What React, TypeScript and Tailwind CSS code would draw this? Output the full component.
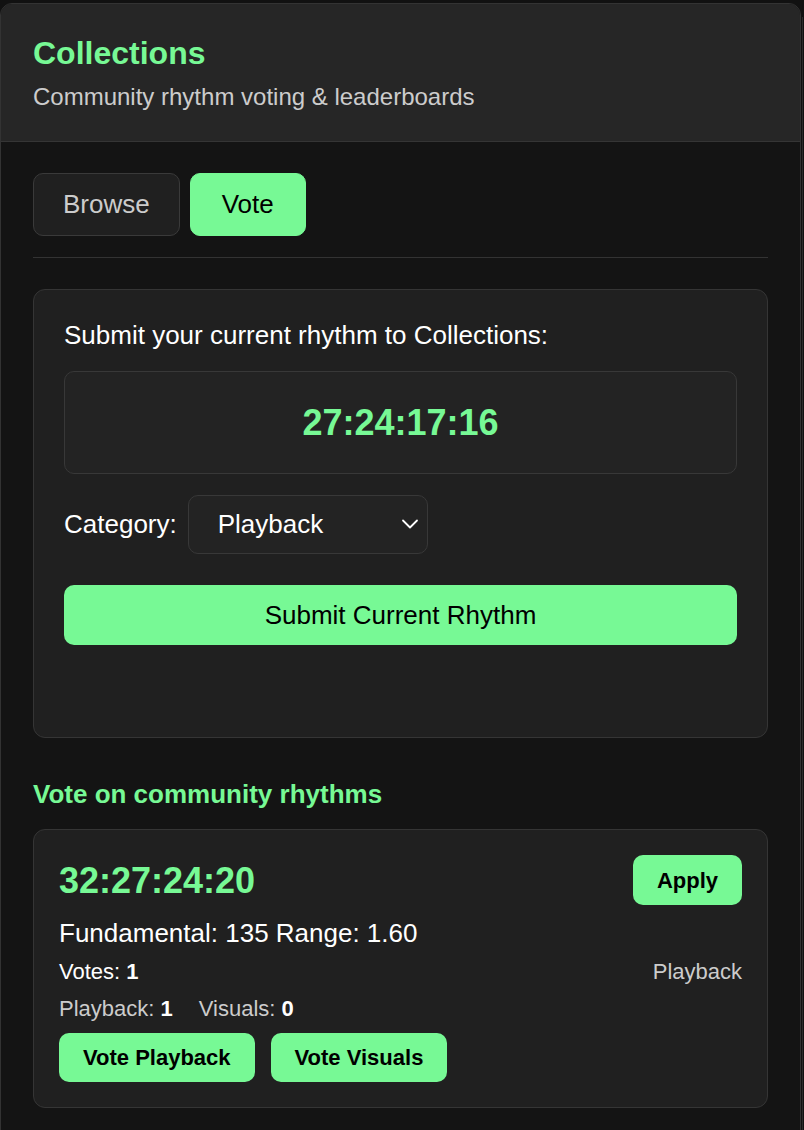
import { useState } from "react";

const GREEN = "bg-[#77f995]";

export default function App() {
  const [tab, setTab] = useState<"browse" | "vote">("vote");
  const [category, setCategory] = useState("Playback");

  return (
    <div className="min-h-[1130px] bg-[#111111] pt-[3px] flex items-start font-['Liberation_Sans',Arial,sans-serif]">
      <div className="w-[801px] rounded-t-[12px] border border-[#333333] overflow-hidden bg-[#141414] min-h-[1127px]">
        {/* Header */}
        <div className="bg-[#262626] border-b border-[#353535] px-8 pt-[31px] pb-[30px]">
          <h1 className="text-[32px] leading-[37px] font-bold text-[#77f995]">Collections</h1>
          <p className="mt-[11px] text-[24px] leading-[28px] text-[#cccccc]">Community rhythm voting &amp; leaderboards</p>
        </div>

        <div className="px-8 pt-[31px] pb-8">
          {/* Tabs */}
          <div className="flex gap-[10px] pb-[21px] border-b border-[#333333]">
            <button
              onClick={() => setTab("browse")}
              className={`h-[63px] px-[29px] rounded-[10px] border text-[26px] ${
                tab === "browse" ? `${GREEN} border-[#77f995] text-black` : "bg-[#202020] border-[#3a3a3a] text-[#cccccc]"
              }`}
            >
              Browse
            </button>
            <button
              onClick={() => setTab("vote")}
              className={`h-[63px] px-[31px] rounded-[10px] border text-[26px] ${
                tab === "vote" ? `${GREEN} border-[#77f995] text-black` : "bg-[#202020] border-[#3a3a3a] text-[#cccccc]"
              }`}
            >
              Vote
            </button>
          </div>

          {/* Submit card */}
          <div className="mt-[31px] bg-[#202020] border border-[#353535] rounded-[12px] px-[30px] pt-[30px] pb-[92px]">
            <p className="text-[26px] leading-[30px] text-white">Submit your current rhythm to Collections:</p>
            <div className="mt-[21px] h-[103px] flex items-center justify-center bg-[#232323] border border-[#383838] rounded-[10px]">
              <span className="text-[36px] font-bold text-[#77f995]">27:24:17:16</span>
            </div>
            <div className="mt-[21px] flex items-center gap-[11px]">
              <label className="text-[26px] text-white">Category:</label>
              <div className="relative w-[240px] h-[59px] bg-[#232323] border border-[#383838] rounded-[10px] flex items-center pl-[29px]">
                <span className="text-[26px] text-white">{category}</span>
                <svg
                  onClick={() => setCategory(category === "Playback" ? "Visuals" : "Playback")}
                  className="absolute right-[8px] top-[21px]"
                  width="18"
                  height="14"
                  viewBox="0 0 18 14"
                  fill="none"
                  stroke="#ffffff"
                  strokeWidth="1.8"
                  strokeLinecap="round"
                  strokeLinejoin="round"
                >
                  <polyline points="2,3.5 9,10.5 16,3.5" />
                </svg>
              </div>
            </div>
            <button className={`mt-[31px] w-full h-[60px] ${GREEN} rounded-[10px] text-[26px] text-black`}>
              Submit Current Rhythm
            </button>
          </div>

          {/* Vote list */}
          <h2 className="mt-[41px] text-[26px] leading-[30px] font-bold text-[#77f995]">Vote on community rhythms</h2>
          <div className="mt-[20px] bg-[#202020] border border-[#353535] rounded-[12px] p-[25px]">
            <div className="flex items-center justify-between">
              <span className="text-[36px] leading-[41px] font-bold text-[#77f995]">32:27:24:20</span>
              <button className={`h-[50px] px-[24px] ${GREEN} rounded-[10px] text-[22px] font-bold text-black`}>Apply</button>
            </div>
            <p className="mt-[13px] text-[26px] leading-[30px] text-white">Fundamental: 135 Range: 1.60</p>
            <div className="mt-[11px] flex justify-between text-[22px] leading-[25px]">
              <span className="text-white">
                Votes: <span className="font-bold">1</span>
              </span>
              <span className="text-[#cccccc]">Playback</span>
            </div>
            <div className="mt-[12px] flex gap-[26px] text-[22px] leading-[25px] text-[#cccccc]">
              <span>
                Playback: <span className="font-bold text-white">1</span>
              </span>
              <span>
                Visuals: <span className="font-bold text-white">0</span>
              </span>
            </div>
            <div className="mt-[12px] flex gap-[16px]">
              <button className={`h-[49px] px-[24px] ${GREEN} rounded-[10px] text-[22px] font-bold text-black`}>Vote Playback</button>
              <button className={`h-[49px] px-[24px] ${GREEN} rounded-[10px] text-[22px] font-bold text-black`}>Vote Visuals</button>
            </div>
          </div>
        </div>
      </div>
      <div className="ml-[1px] mt-[14px] w-[1px] h-[1113px] bg-[#2c2c2c]" />
    </div>
  );
}
